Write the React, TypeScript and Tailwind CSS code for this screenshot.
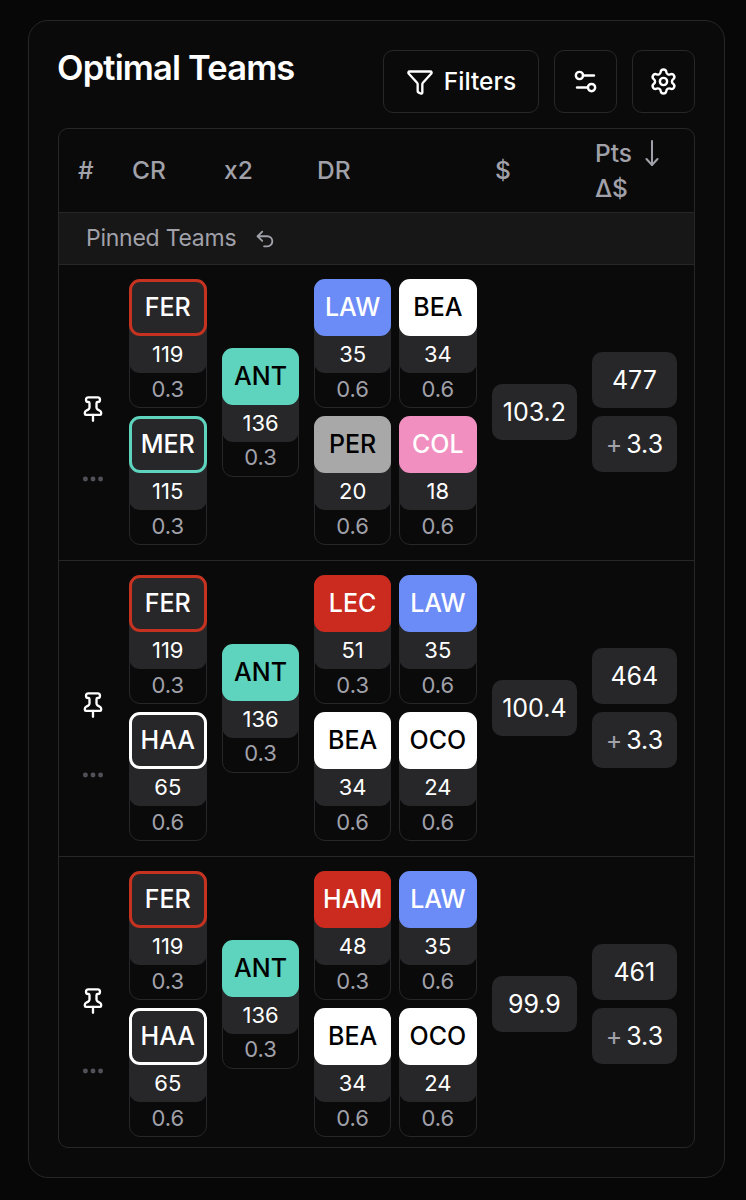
import { Ellipsis, Funnel, Pin, Settings, Settings2, Undo2 } from "lucide-react";

const RED = "bg-[#cb2a1e] text-white";
const BLUE = "bg-[#6b8cf7] text-white";
const WHITE = "bg-white text-black";
const GREY = "bg-[#a8a8a8] text-black";
const PINK = "bg-[#f18fc0] text-white";
const TEAL = "bg-[#5ed3bd] text-black";

type ChipData = { name: string; price: string; delta: string; cls: string };

const FER: ChipData = { name: "FER", price: "119", delta: "0.3", cls: "bg-[#27272a] text-white border-[3px] border-[#c5321f]" };
const MER: ChipData = { name: "MER", price: "115", delta: "0.3", cls: "bg-[#27272a] text-white border-[3px] border-[#5ed3bd]" };
const HAA: ChipData = { name: "HAA", price: "65", delta: "0.6", cls: "bg-[#27272a] text-white border-[3px] border-white" };
const ANT: ChipData = { name: "ANT", price: "136", delta: "0.3", cls: TEAL };
const LAW: ChipData = { name: "LAW", price: "35", delta: "0.6", cls: BLUE };
const BEA: ChipData = { name: "BEA", price: "34", delta: "0.6", cls: WHITE };
const PER: ChipData = { name: "PER", price: "20", delta: "0.6", cls: GREY };
const COL: ChipData = { name: "COL", price: "18", delta: "0.6", cls: PINK };
const LEC: ChipData = { name: "LEC", price: "51", delta: "0.3", cls: RED };
const OCO: ChipData = { name: "OCO", price: "24", delta: "0.6", cls: WHITE };
const HAM: ChipData = { name: "HAM", price: "48", delta: "0.3", cls: RED };

function Chip({ d }: { d: ChipData }) {
  return (
    <div className="w-[77.5px] h-[129px] rounded-[11px] border border-[#27272a] flex flex-col items-center">
      <div className="w-[calc(100%+2px)] -mt-px bg-[#27272a] rounded-[11px] h-[94px] flex flex-col shrink-0">
        <div className={`h-[57px] rounded-[11px] flex items-center justify-center text-[25px] font-medium leading-none ${d.cls}`}>
          {d.name}
        </div>
        <div className="flex-1 flex items-center justify-center text-[22px] leading-none text-white pb-[1px]">{d.price}</div>
      </div>
      <div className="flex-1 flex items-center justify-center text-[22px] leading-none text-[#a1a1aa] pb-[3px]">{d.delta}</div>
    </div>
  );
}

function Stat({ children }: { children: React.ReactNode }) {
  return (
    <div className="w-[85px] h-[56px] rounded-[10px] bg-[#27272a] flex items-center justify-center text-[25px] leading-none text-white">
      {children}
    </div>
  );
}

type Team = { cr: ChipData[]; dr: ChipData[]; cost: string; pts: string; last?: boolean };

const teams: Team[] = [
  { cr: [FER, MER], dr: [LAW, BEA, PER, COL], cost: "103.2", pts: "477" },
  { cr: [FER, HAA], dr: [LEC, LAW, BEA, OCO], cost: "100.4", pts: "464" },
  { cr: [FER, HAA], dr: [HAM, LAW, BEA, OCO], cost: "99.9", pts: "461", last: true },
];

function Row({ t }: { t: Team }) {
  return (
    <div className={`flex items-center border-t border-[#27272a] pt-[14px] ${t.last ? "pb-[10px]" : "pb-[15px]"}`}>
      <div className="w-[70px] pr-[2px] pt-[63px] flex flex-col items-center gap-[43px] text-white shrink-0">
        <Pin size={28} strokeWidth={2} />
        <Ellipsis size={26} strokeWidth={2.5} className="text-[#52525b]" />
      </div>
      <div className="flex flex-col gap-[8px] shrink-0">
        {t.cr.map((c, i) => (
          <Chip key={i} d={c} />
        ))}
      </div>
      <div className="ml-[15.3px] shrink-0">
        <Chip d={ANT} />
      </div>
      <div className="ml-[14.6px] grid grid-cols-[77.5px_77.5px] gap-x-[7.7px] gap-y-[8px] shrink-0">
        {t.dr.map((c, i) => (
          <Chip key={i} d={c} />
        ))}
      </div>
      <div className="ml-[15.3px] shrink-0">
        <Stat>{t.cost}</Stat>
      </div>
      <div className="ml-[15px] flex flex-col gap-[8px] shrink-0">
        <Stat>{t.pts}</Stat>
        <Stat>
          <span className="text-[#a1a1aa] mr-[4px]">+</span>3.3
        </Stat>
      </div>
    </div>
  );
}

export default function App() {
  return (
    <div className="min-h-[1200px] bg-[#070707] pt-[20px] pl-[28px] pr-[21px] pb-[22px] font-['Inter',sans-serif]">
      <div className="w-[697px] rounded-[20px] border border-[#27272a] bg-[#0a0a0a] p-[29px]">
        <div className="flex justify-between items-start mb-[15px]">
          <h1 className="-ml-px text-[34.5px] leading-[36px] font-semibold tracking-[-0.85px] text-white">Optimal Teams</h1>
          <div className="flex gap-[15px]">
            <button className="w-[156px] h-[63px] rounded-[10px] border border-[#27272a] flex items-center justify-center gap-[10px] text-white text-[24.5px] font-medium">
              <Funnel size={28} strokeWidth={2} />
              Filters
            </button>
            <button className="w-[63px] h-[63px] rounded-[10px] border border-[#27272a] flex items-center justify-center text-white">
              <Settings2 size={29} strokeWidth={2} />
            </button>
            <button className="w-[63px] h-[63px] rounded-[10px] border border-[#27272a] flex items-center justify-center text-white">
              <Settings size={29} strokeWidth={2} />
            </button>
          </div>
        </div>
        <div className="rounded-[10px] border border-[#27272a] overflow-hidden">
          <div className="flex h-[83px] items-center text-[24.5px] font-medium leading-[35px] text-[#a1a1aa]">
            <span className="w-[73px] pl-[19px]">#</span>
            <span className="w-[92px]">CR</span>
            <span className="w-[93px]">x2</span>
            <span className="w-[178px]">DR</span>
            <span className="w-[100px]">$</span>
            <span className="flex flex-col">
              <span className="flex items-center gap-[13px]">
                Pts
                <svg width="14" height="26" viewBox="0 0 14 26" fill="none" stroke="#a1a1aa" strokeWidth="2" strokeLinecap="round" strokeLinejoin="round">
                  <path d="M7 1v24" />
                  <path d="M1.5 19 7 25l5.5-6" />
                </svg>
              </span>
              <span>Δ$</span>
            </span>
          </div>
          <div className="flex h-[52px] items-center border-t border-[#27272a] bg-[#171717] pl-[27px] gap-[18px] text-[23px] tracking-[-0.25px] text-[#a1a1aa]">
            Pinned Teams
            <Undo2 size={22} strokeWidth={2} />
          </div>
          {teams.map((t, i) => (
            <Row key={i} t={t} />
          ))}
        </div>
      </div>
    </div>
  );
}
